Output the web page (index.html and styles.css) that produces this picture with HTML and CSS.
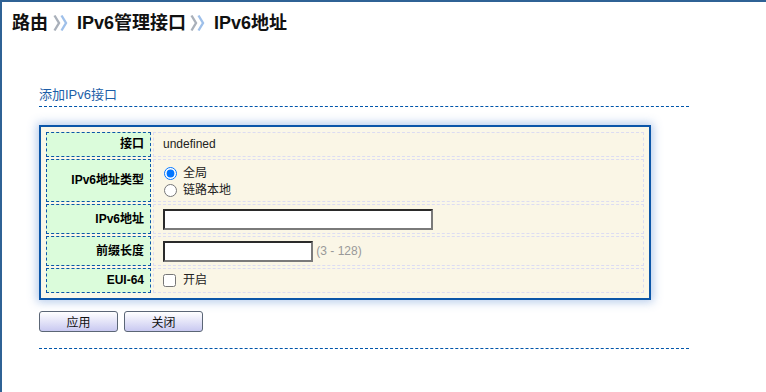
FILE: index.html
```html
<!DOCTYPE html>
<html lang="zh-CN">
<head>
  <meta charset="UTF-8">
  <title>IPv6地址</title>
  <link rel="stylesheet" href="styles.css">
</head>
<body>
  <div class="crumbs">
    <span>路由</span>
    <svg class="sep" width="29" height="18" viewBox="0 0 29 18">
      <path d="M6.5 1.5 L11 9 L6.5 16.5" fill="none" stroke="#a9b0ba" stroke-width="2.4"/>
      <path d="M13.5 1.5 L18 9 L13.5 16.5" fill="none" stroke="#9fc0ea" stroke-width="2.4"/>
    </svg>
    <span>IPv6管理接口</span>
    <svg class="sep" width="28" height="18" viewBox="0 0 28 18">
      <path d="M5.5 1.5 L10 9 L5.5 16.5" fill="none" stroke="#a9b0ba" stroke-width="2.4"/>
      <path d="M12.5 1.5 L17 9 L12.5 16.5" fill="none" stroke="#9fc0ea" stroke-width="2.4"/>
    </svg>
    <span>IPv6地址</span>
  </div>

  <div class="section">
    <div class="section-title">添加IPv6接口</div>

    <div class="panel">
      <table class="form-table">
        <tr>
          <td class="label">接口</td>
          <td class="value">undefined</td>
        </tr>
        <tr>
          <td class="label">IPv6地址类型</td>
          <td class="value value-radios">
            <label class="opt"><input type="radio" name="type" checked> 全局</label>
            <label class="opt"><input type="radio" name="type"> 链路本地</label>
          </td>
        </tr>
        <tr>
          <td class="label">IPv6地址</td>
          <td class="value"><input type="text" class="txt txt-long"></td>
        </tr>
        <tr>
          <td class="label">前缀长度</td>
          <td class="value"><input type="text" class="txt txt-short"> <span class="hint">(3 - 128)</span></td>
        </tr>
        <tr>
          <td class="label">EUI-64</td>
          <td class="value"><label class="opt"><input type="checkbox"> 开启</label></td>
        </tr>
      </table>
    </div>

    <div class="buttons">
      <button class="btn">应用</button>
      <button class="btn">关闭</button>
    </div>

    <div class="section-end"></div>
  </div>
</body>
</html>
```

FILE: styles.css
```css
body {
  margin: 0;
  border-top: 2px solid #2f6295;
  border-left: 2px solid #2f6295;
  min-height: 390px;
  background: #fff;
  font-family: "Liberation Sans", Arial, "Noto Sans CJK SC", sans-serif;
  font-size: 12px;
  color: #000;
}
.crumbs {
  padding: 10px 0 0 10px;
  height: 22px;
  font-size: 18px;
  font-weight: bold;
  line-height: 22px;
  color: #111;
  display: flex;
  align-items: center;
}
.crumbs .sep {
  display: block;
}
.section {
  width: 650px;
  margin: 52px 0 0 37px;
}
.section-title {
  font-size: 13px;
  line-height: 18px;
  color: #1c5ea8;
  padding-bottom: 2px;
  border-bottom: 1px dashed #0055aa;
}
.panel {
  width: 612px;
  box-sizing: border-box;
  margin-top: 18px;
  border: 2px solid #0b56a8;
  padding: 3px;
  background: #faf7e8;
  box-shadow: 0 0 9px 2px rgba(90, 140, 210, 0.45);
}
.form-table {
  width: 100%;
  border-spacing: 2px;
}
.form-table td {
  line-height: 17px;
  padding: 3px 9px;
}
.form-table .label {
  width: 92px;
  padding: 3px 6px 3px 5px;
  text-align: right;
  font-weight: bold;
  background: #dbfcdb;
  border: 1px dashed #0b56a8;
}
.form-table .value {
  background: #faf6e6;
  border: 1px dashed #dcdcf2;
  color: #222;
}
.form-table .value-radios {
  padding-top: 5px;
  padding-bottom: 2px;
}
.opt {
  display: flex;
  align-items: center;
  height: 17px;
}
.opt input {
  margin: 0 7px 0 0;
  width: 13px;
  height: 13px;
}
.value-radios .opt input {
  margin-left: 1px;
  margin-right: 6px;
}
.txt {
  box-sizing: border-box;
  height: 21px;
  margin: 1px 0 0 0;
  border: 2px solid;
  border-color: #2a2a2a #7a7a7a #7a7a7a #2a2a2a;
  background: #fff;
  vertical-align: middle;
}
.txt-long {
  width: 270px;
}
.txt-short {
  width: 150px;
}
.hint {
  color: #999;
  vertical-align: middle;
}
.buttons {
  display: flex;
  gap: 6px;
  margin-top: 11px;
}
.btn {
  width: 79px;
  height: 21px;
  padding: 0;
  border: 1px solid #5b6676;
  border-radius: 3px;
  background: linear-gradient(#ffffff, #c9c9f1);
  font-family: "Liberation Sans", Arial, "Noto Sans CJK SC", sans-serif;
  font-size: 12px;
  color: #111;
}
.section-end {
  margin-top: 16px;
  border-bottom: 1px dashed #0055aa;
}
```
